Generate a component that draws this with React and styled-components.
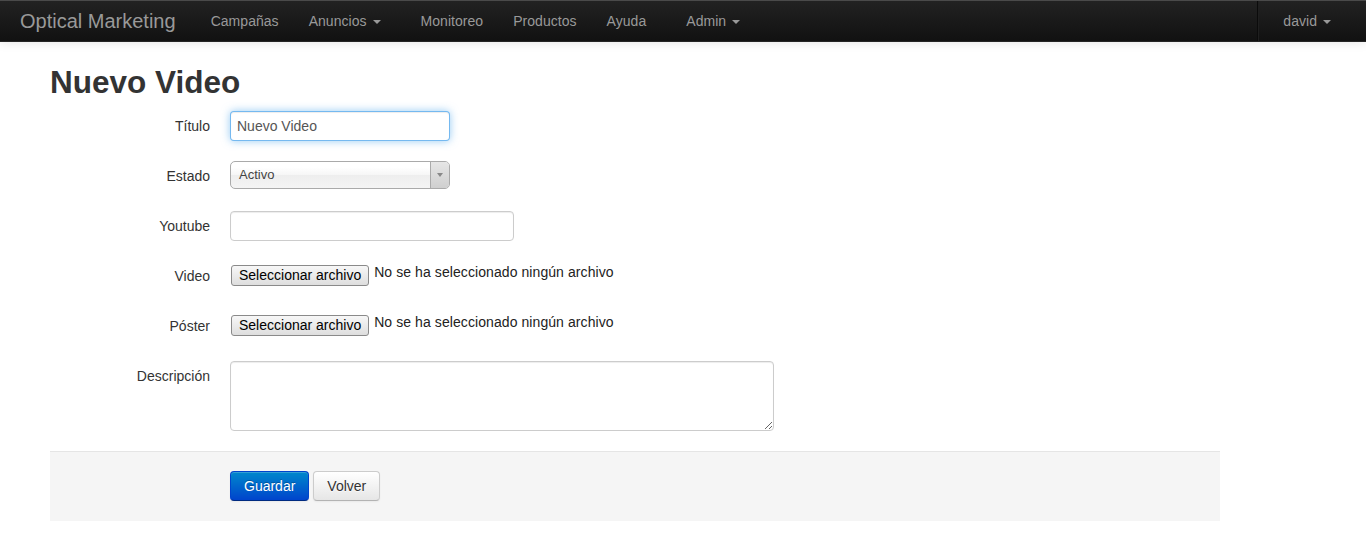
import { styled, createGlobalStyle } from "styled-components";

const GlobalStyle = createGlobalStyle`
  html, body {
    margin: 0;
    padding: 0;
    background: #fff;
  }
  body {
    font-family: "Liberation Sans", Arial, sans-serif;
    font-size: 14px;
    line-height: 20px;
    color: #333;
  }
  * { box-sizing: border-box; }
`;

const Navbar = styled.div`
  height: 42px;
  display: flex;
  align-items: stretch;
  padding: 0 20px;
  background: linear-gradient(#222222, #111111);
  border-top: 1px solid #4a4a4a;
  border-bottom: 1px solid #252525;
  box-shadow: 0 1px 10px rgba(0, 0, 0, 0.1);
`;

const Brand = styled.a`
  display: block;
  padding: 10px 20px 10px 0;
  font-size: 20px;
  line-height: 20px;
  color: #999;
  text-decoration: none;
  white-space: nowrap;
`;

const Nav = styled.div`
  display: flex;
  align-items: stretch;
`;

const NavLink = styled.a`
  display: flex;
  align-items: center;
  padding: 0 15px;
  margin-left: ${(p) => (p.$spaced ? "10px" : "0")};
  margin-right: ${(p) => (p.$after ? "10px" : "0")};
  color: #999;
  font-size: 14px;
  letter-spacing: 0.04px;
  text-decoration: none;
  white-space: nowrap;
`;

const Caret = styled.span`
  display: inline-block;
  width: 0;
  height: 0;
  margin-left: 6px;
  margin-top: 1px;
  border-top: 4px solid #999;
  border-left: 4px solid transparent;
  border-right: 4px solid transparent;
`;

const RightNav = styled(Nav)`
  margin-left: auto;
`;

const Divider = styled.div`
  width: 20px;
  display: flex;
  justify-content: center;
  &::before {
    content: "";
    width: 1px;
    background: #0b0b0b;
  }
  &::after {
    content: "";
    width: 1px;
    background: #1f1f1f;
  }
`;

const Main = styled.div`
  width: 1170px;
  margin-left: 50px;
  padding-top: 20px;
`;

const Title = styled.h1`
  margin: 0 0 9px;
  font-size: 31.5px;
  line-height: 40px;
  font-weight: bold;
  color: #333;
`;

const Form = styled.form`
  margin: 0;
`;

const Group = styled.div`
  display: flex;
  align-items: flex-start;
  min-height: 30px;
  margin-bottom: 20px;
`;

const Label = styled.label`
  width: 160px;
  margin-right: 20px;
  padding-top: 5px;
  text-align: right;
  font-size: 14px;
  line-height: 20px;
  color: #333;
`;

const Input = styled.input`
  width: ${(p) => p.$width}px;
  height: 30px;
  padding: 4px 6px;
  font-family: "Liberation Sans", Arial, sans-serif;
  font-size: 14px;
  line-height: 20px;
  color: #555;
  background: #fff;
  border: 1px solid ${(p) => (p.$focus ? "rgba(82, 168, 236, 0.8)" : "#ccc")};
  border-radius: 4px;
  outline: none;
  box-shadow: inset 0 1px 1px rgba(0, 0, 0, 0.075)
    ${(p) => (p.$focus ? ", 0 0 8px rgba(82, 168, 236, 0.6)" : "")};
`;

const Select = styled.div`
  width: 220px;
  height: 28px;
  display: flex;
  align-items: stretch;
  border: 1px solid #aaa;
  border-radius: 5px;
  background: linear-gradient(#ffffff 20%, #f6f6f6 50%, #eeeeee 52%, #f4f4f4 100%);
  overflow: hidden;
`;

const SelectText = styled.span`
  flex: 1;
  padding-left: 8px;
  font-size: 13px;
  line-height: 26px;
  color: #444;
`;

const SelectArrow = styled.span`
  width: 19px;
  display: flex;
  align-items: center;
  justify-content: center;
  border-left: 1px solid #aaa;
  background: linear-gradient(#e6e6e6, #cfcfcf);
  &::after {
    content: "";
    border-top: 4px solid #888;
    border-left: 3px solid transparent;
    border-right: 3px solid transparent;
  }
`;

const FileRow = styled.div`
  display: flex;
  align-items: flex-start;
  height: 30px;
`;

const FileButton = styled.button`
  margin: 4px 5px 0 1px;
  height: 21px;
  padding: 0 7px;
  font-family: "Liberation Sans", Arial, sans-serif;
  font-size: 14px;
  line-height: 19px;
  color: #000;
  background: linear-gradient(#f7f7f7, #dedede);
  border: 1px solid #8a8a8a;
  border-radius: 3px;
  white-space: nowrap;
`;

const FileText = styled.span`
  margin-top: 3px;
  font-size: 14px;
  line-height: 16px;
  letter-spacing: 0.08px;
  color: #222;
  white-space: nowrap;
`;

const TextArea = styled.textarea`
  width: 544px;
  height: 70px;
  padding: 4px 6px;
  font-family: "Liberation Sans", Arial, sans-serif;
  font-size: 14px;
  border: 1px solid #ccc;
  border-radius: 4px;
  outline: none;
  box-shadow: inset 0 1px 1px rgba(0, 0, 0, 0.075);
  display: block;
`;

const Actions = styled.div`
  display: flex;
  gap: 4px;
  padding: 19px 20px 20px 180px;
  background: #f5f5f5;
  border-top: 1px solid #e5e5e5;
`;

const Button = styled.button`
  height: 30px;
  padding: 4px 13px;
  font-family: "Liberation Sans", Arial, sans-serif;
  font-size: 14px;
  line-height: 20px;
  border-radius: 4px;
  border: 1px solid;
  color: ${(p) => (p.$primary ? "#fff" : "#333")};
  background: ${(p) =>
    p.$primary
      ? "linear-gradient(#0088cc, #0044cc)"
      : "linear-gradient(#ffffff, #e6e6e6)"};
  border-color: ${(p) =>
    p.$primary
      ? "#0044cc #0044cc #002a80"
      : "#cccccc #cccccc #b3b3b3"};
  text-shadow: ${(p) =>
    p.$primary ? "0 -1px 0 rgba(0,0,0,0.25)" : "0 1px 1px rgba(255,255,255,0.75)"};
  box-shadow: inset 0 1px 0 rgba(255, 255, 255, 0.2), 0 1px 2px rgba(0, 0, 0, 0.05);
`;

const menu = [
  { label: "Campañas" },
  { label: "Anuncios", caret: true, after: true },
  { label: "Monitoreo" },
  { label: "Productos" },
  { label: "Ayuda" },
  { label: "Admin", caret: true, spaced: true },
];

export default function App() {
  return (
    <>
      <GlobalStyle />
      <Navbar>
        <Brand>Optical Marketing</Brand>
        <Nav>
          {menu.map((m) => (
            <NavLink key={m.label} $after={m.after} $spaced={m.spaced}>
              {m.label}
              {m.caret && <Caret />}
            </NavLink>
          ))}
        </Nav>
        <RightNav>
          <Divider />
          <NavLink>
            david
            <Caret />
          </NavLink>
        </RightNav>
      </Navbar>
      <Main>
        <Title>Nuevo Video</Title>
        <Form onSubmit={(e) => e.preventDefault()}>
          <Group>
            <Label>Título</Label>
            <Input $width={220} $focus defaultValue="Nuevo Video" />
          </Group>
          <Group>
            <Label>Estado</Label>
            <Select>
              <SelectText>Activo</SelectText>
              <SelectArrow />
            </Select>
          </Group>
          <Group>
            <Label>Youtube</Label>
            <Input $width={284} />
          </Group>
          <Group>
            <Label>Video</Label>
            <FileRow>
              <FileButton type="button">Seleccionar archivo</FileButton>
              <FileText>No se ha seleccionado ningún archivo</FileText>
            </FileRow>
          </Group>
          <Group>
            <Label>Póster</Label>
            <FileRow>
              <FileButton type="button">Seleccionar archivo</FileButton>
              <FileText>No se ha seleccionado ningún archivo</FileText>
            </FileRow>
          </Group>
          <Group>
            <Label>Descripción</Label>
            <TextArea />
          </Group>
          <Actions>
            <Button $primary type="submit">Guardar</Button>
            <Button type="button">Volver</Button>
          </Actions>
        </Form>
      </Main>
    </>
  );
}
